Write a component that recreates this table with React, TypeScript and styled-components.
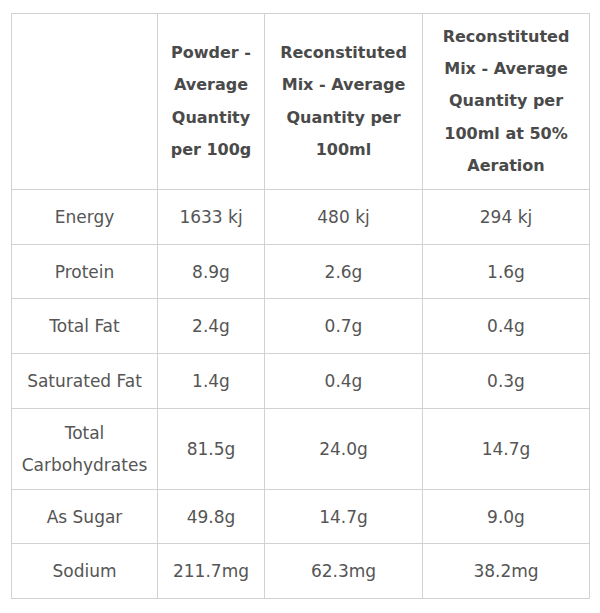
import React from 'react'
import styled, { createGlobalStyle } from 'styled-components'

const GlobalStyle = createGlobalStyle`
  body {
    margin: 0;
    background: #ffffff;
    font-family: "DejaVu Sans", "Open Sans", sans-serif;
  }
`

const rows: [string, string, string, string][] = [
  ['Energy', '1633 kj', '480 kj', '294 kj'],
  ['Protein', '8.9g', '2.6g', '1.6g'],
  ['Total Fat', '2.4g', '0.7g', '0.4g'],
  ['Saturated Fat', '1.4g', '0.4g', '0.3g'],
  ['Total Carbohydrates', '81.5g', '24.0g', '14.7g'],
  ['As Sugar', '49.8g', '14.7g', '9.0g'],
  ['Sodium', '211.7mg', '62.3mg', '38.2mg'],
]

const App: React.FC = () => {
  return (
    <Page>
      <GlobalStyle />
      <NutritionTable>
        <colgroup>
          <col style={{ width: 146 }} />
          <col style={{ width: 107 }} />
          <col style={{ width: 158 }} />
          <col style={{ width: 167 }} />
        </colgroup>
        <thead>
          <tr>
            <HeadCell />
            <HeadCell>Powder - Average Quantity per 100g</HeadCell>
            <HeadCell>Reconstituted Mix - Average Quantity per 100ml</HeadCell>
            <HeadCell>Reconstituted Mix - Average Quantity per 100ml at 50% Aeration</HeadCell>
          </tr>
        </thead>
        <tbody>
          {rows.map((r) => (
            <BodyRow key={r[0]}>
              {r.map((v, i) => (
                <Cell key={i}>{v}</Cell>
              ))}
            </BodyRow>
          ))}
        </tbody>
      </NutritionTable>
    </Page>
  )
}

export default App

const Page = styled.div`
  padding: 13px 11px;
`

const NutritionTable = styled.table`
  width: 578px;
  table-layout: fixed;
  border-collapse: collapse;
  border: 1px solid #d2d2d2;
`

const HeadCell = styled.th`
  border: 1px solid #d2d2d2;
  padding: 7px 8px;
  font-size: 16px;
  font-weight: 700;
  line-height: 32.2px;
  color: #4a4a4a;
  text-align: center;
  vertical-align: middle;
`

const BodyRow = styled.tr`
  height: 54.7px;
`

const Cell = styled.td`
  border: 1px solid #d2d2d2;
  padding: 8px 8px;
  font-size: 17px;
  line-height: 32px;
  color: #555555;
  text-align: center;
  vertical-align: middle;
`
